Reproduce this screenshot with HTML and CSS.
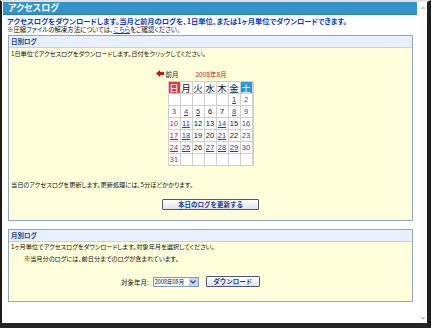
FILE: index.html
```html
<!DOCTYPE html>
<html lang="ja">
<head>
    <meta charset="UTF-8">
    <title>アクセスログ</title>
    <link rel="stylesheet" href="styles.css">
</head>
<body>

    <div class="window">
        <div class="main">
            <h1 class="page-title">アクセスログ</h1>
            <p class="lead">アクセスログをダウンロードします。当月と前月のログを、1日単位、または1ヶ月単位でダウンロードできます。</p>
            <p class="note">※&#xFE0E;圧縮ファイルの解凍方法については、<a href="#">こちら</a>をご確認ください。</p>

            <!-- 日別ログ -->
            <div class="panel">
                <div class="panel-head">日別ログ</div>
                <div class="panel-body daily">
                    <p class="text">1日単位でアクセスログをダウンロードします。日付をクリックしてください。</p>

                    <div class="cal">
                        <div class="cal-nav">
                            <svg class="prev-arrow" width="8" height="7" viewBox="0 0 8 7"><polygon points="0,3.5 4,0 4,2 8,2 8,5 4,5 4,7" fill="#cc1111"/></svg>
                            <span class="prev">前月</span>
                            <span class="month">2008年8月</span>
                        </div>
                        <div class="cal-grid">
                            <span class="head sun">日</span><span class="head">月</span><span class="head">火</span><span class="head">水</span><span class="head">木</span><span class="head">金</span><span class="head sat">土</span>

                            <span></span><span></span><span></span><span></span><span></span><span><a href="#">1</a></span><span class="sat">2</span>
                            <span class="sun">3</span><span><a href="#">4</a></span><span><a href="#">5</a></span><span>6</span><span>7</span><span><a href="#">8</a></span><span class="sat">9</span>
                            <span class="sun">10</span><span><a href="#">11</a></span><span>12</span><span>13</span><span><a href="#">14</a></span><span>15</span><span class="sat">16</span>
                            <span class="sun"><a href="#">17</a></span><span><a href="#">18</a></span><span>19</span><span>20</span><span><a href="#">21</a></span><span>22</span><span class="sat">23</span>
                            <span class="sun"><a href="#">24</a></span><span><a href="#">25</a></span><span>26</span><span><a href="#">27</a></span><span><a href="#">28</a></span><span><a href="#">29</a></span><span class="sat">30</span>
                            <span class="sun">31</span><span></span><span></span><span></span><span></span><span></span><span></span>
                        </div>
                    </div>

                    <p class="text update-text">当日のアクセスログを更新します。更新処理には、5分ほどかかります。</p>
                    <div class="btn-row">
                        <button class="btn btn-wide">本日のログを更新する</button>
                    </div>
                </div>
            </div>

            <!-- 月別ログ -->
            <div class="panel monthly-panel">
                <div class="panel-head">月別ログ</div>
                <div class="panel-body monthly">
                    <p class="text">1ヶ月単位でアクセスログをダウンロードします。対象年月を選択してください。</p>
                    <p class="text indent">※&#xFE0E;当月分のログには、前日分までのログが含まれています。</p>
                    <div class="select-row">
                        <span class="label">対象年月:</span>
                        <span class="select">
                            <span class="select-value">2008年08月</span>
                            <span class="select-btn">
                                <svg width="6" height="4" viewBox="0 0 6 4"><polyline points="0.5,0.5 3,3 5.5,0.5" fill="none" stroke="#2b4f9e" stroke-width="1.3"/></svg>
                            </span>
                        </span>
                        <button class="btn">ダウンロード</button>
                    </div>
                </div>
            </div>
        </div>

        <div class="scrollbar">
            <svg width="6" height="5" viewBox="0 0 6 5"><polygon points="3,1 5.5,4 0.5,4" fill="#c8c8c8"/></svg>
            <svg width="6" height="5" viewBox="0 0 6 5"><polygon points="0.5,1 5.5,1 3,4" fill="#c8c8c8"/></svg>
        </div>
    </div>

</body>
</html>
```

FILE: styles.css
```css
/* 全体 */
body {
    margin: 0;
    background-color: #ffffff;
    color: #111111;
    font-family: "Noto Sans CJK JP", "Liberation Sans", sans-serif;
    font-feature-settings: "palt";
}

p {
    margin: 0;
}

/* ウィンドウ枠 */
.window {
    display: flex;
    width: 431px;
    height: 328px;
    box-sizing: border-box;
    border-top: 2px solid #e2e2e2;
    border-left: 2px solid #1e1e1e;
    border-right: 4px solid #1e1e1e;
    border-bottom: 5px solid #262626;
}

.main {
    flex: 1;
}

.scrollbar {
    width: 8px;
    display: flex;
    flex-direction: column;
    justify-content: space-between;
    align-items: center;
    padding: 3px 0 2px;
    box-sizing: border-box;
    background-color: #fdfdfd;
}

/* タイトル */
.page-title {
    margin: 0 2px 0 1px;
    height: 13px;
    padding-left: 5px;
    background-color: #3494c9;
    border-bottom: 1px solid #2b7fb0;
    box-sizing: border-box;
    color: #ffffff;
    font-size: 9px;
    font-weight: bold;
    line-height: 12px;
}

.lead {
    margin-top: 1px;
    padding-left: 5px;
    color: #0b3bc4;
    font-size: 7.3px;
    font-weight: bold;
    line-height: 10px;
}

.note {
    padding-left: 5px;
    font-size: 6.4px;
    line-height: 8px;
    color: #111111;
}

.note a {
    color: #2233cc;
}

/* パネル */
.panel {
    margin: 1px 6px 0;
    border: 1px solid #8fa6bd;
}

.monthly-panel {
    margin-top: 8px;
}

.panel-head {
    height: 11px;
    padding-left: 2px;
    background-color: #e7f0fc;
    border-bottom: 1px solid #c3d3e6;
    color: #1c3f8c;
    font-size: 6.5px;
    font-weight: bold;
    line-height: 11px;
}

.panel-body {
    background-color: #ffffdc;
    padding: 0 2px;
}

.daily {
    padding-top: 1px;
    padding-bottom: 10px;
}

.monthly {
    padding-bottom: 14px;
}

.text {
    font-size: 6.2px;
    line-height: 9px;
    color: #111111;
}

.indent {
    margin-top: 3px;
    padding-left: 13px;
}

.update-text {
    margin-top: 14px;
}

/* カレンダー */
.cal {
    width: 86px;
    margin: 11px auto 0;
}

.cal-nav {
    display: flex;
    align-items: center;
    height: 9px;
    margin: 0 0 3px -12px;
    font-size: 6.5px;
    white-space: nowrap;
}

.prev-arrow {
    margin-right: 2px;
}

.prev {
    color: #111111;
}

.month {
    margin-left: 17px;
    color: #cc1111;
}

.cal-grid {
    display: grid;
    grid-template-columns: repeat(7, 11px);
    grid-auto-rows: 11px;
    gap: 1px;
    padding: 1px;
    background-color: #cfcfcf;
}

.cal-grid span {
    display: flex;
    align-items: center;
    justify-content: center;
    background-color: #ffffff;
    font-family: "Liberation Sans", sans-serif;
    font-size: 7.5px;
    color: #111111;
}

.cal-grid .head {
    font-family: "Noto Sans CJK JP", sans-serif;
    font-size: 9.5px;
}

.cal-grid .head.sun {
    background-color: #e23b3b;
    color: #ffffff;
}

.cal-grid .head.sat {
    background-color: #1f9be0;
    color: #ffffff;
}

.cal-grid .sun {
    color: #cc1133;
}

.cal-grid .sat {
    color: #3344aa;
}

.cal-grid a {
    color: #3333bb;
}

.cal-grid .sun a {
    color: #cc1133;
}

/* ボタン */
.btn-row {
    display: flex;
    justify-content: center;
    margin-top: 10px;
}

.btn {
    height: 11px;
    padding: 0;
    border: 1px solid #4c5a70;
    border-radius: 1px;
    background: linear-gradient(#ffffff, #dfe4ec);
    color: #1a3c94;
    font-family: "Noto Sans CJK JP", sans-serif;
    font-size: 6.5px;
    font-weight: bold;
    line-height: 9px;
    width: 54px;
}

.btn-wide {
    width: 97px;
}

/* 月選択 */
.select-row {
    display: flex;
    align-items: center;
    margin-top: 13px;
    padding-left: 110px;
    height: 11px;
}

.label {
    font-size: 6.5px;
    color: #111111;
    margin-right: 4px;
}

.select {
    display: flex;
    align-items: center;
    width: 46px;
    height: 10px;
    box-sizing: border-box;
    border: 1px solid #7f9db9;
    background-color: #ffffff;
    margin-right: 7px;
}

.select-value {
    flex: 1;
    padding-left: 1px;
    font-size: 5.5px;
    color: #111111;
    white-space: nowrap;
}

.select-btn {
    display: flex;
    align-items: center;
    justify-content: center;
    width: 9px;
    height: 8px;
    background-color: #c6d6f4;
    border-left: 1px solid #ffffff;
}
```
